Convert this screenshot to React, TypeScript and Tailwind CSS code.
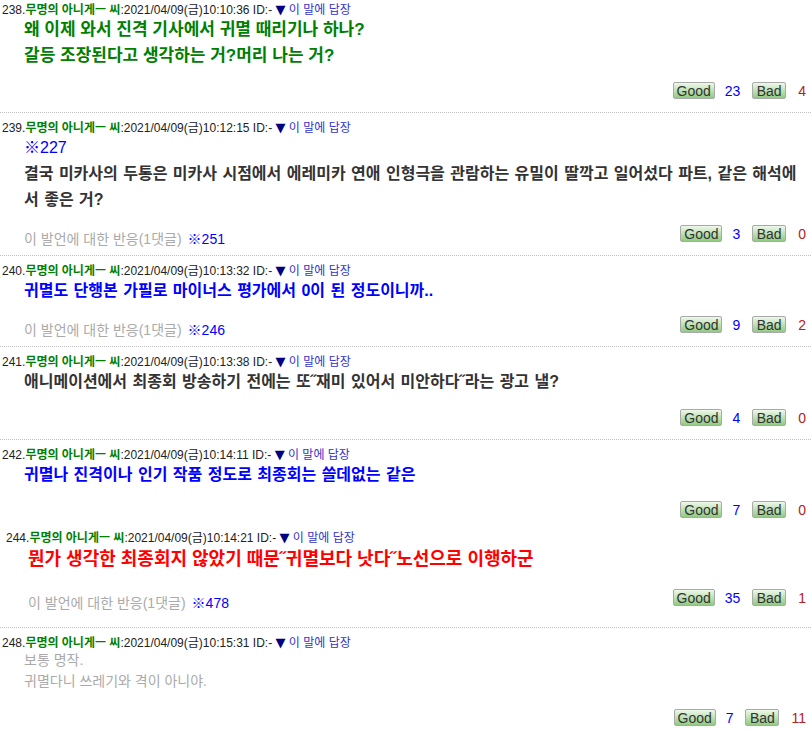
import React from 'react';

type Post = {
  no: number;
  time: string;
  tone: string;
  lines: string[];
  refNo?: string;
  reaction?: string;
  good: number;
  bad: number;
  sep?: boolean;
  shift?: boolean;
  top: string;
  foot: string;
  bottom: string;
};

const posts: Post[] = [
  {
    no: 238,
    time: '10:10:36',
    tone: 'text-[#008000] font-bold text-[17px] leading-[26px]',
    lines: ['왜 이제 와서 진격 기사에서 귀멸 때리기나 하나?', '갈등 조장된다고 생각하는 거?머리 나는 거?'],
    good: 23,
    bad: 4,
    sep: true,
    top: 'pt-[3px]',
    foot: 'mt-[13px]',
    bottom: 'pb-[13px]',
  },
  {
    no: 239,
    time: '10:12:15',
    tone: 'text-[#333333] font-bold text-[16px] leading-[26px] [word-spacing:1px]',
    refNo: '※227',
    lines: [
      '결국 미카사의 두통은 미카사 시점에서 에레미카 연애 인형극을 관람하는 유밀이 딸깍고 일어섰다 파트, 같은 해석에',
      '서 좋은 거?',
    ],
    reaction: '※251',
    good: 3,
    bad: 0,
    sep: true,
    top: 'pt-[8px]',
    foot: 'mt-[12px]',
    bottom: 'pb-[13px]',
  },
  {
    no: 240,
    time: '10:13:32',
    tone: 'text-[#0000ff] font-bold text-[16px] leading-[26px] [word-spacing:1px]',
    lines: ['귀멸도 단행본 가필로 마이너스 평가에서 0이 된 정도이니까..'],
    reaction: '※246',
    good: 9,
    bad: 2,
    sep: true,
    top: 'pt-[8px]',
    foot: 'mt-[12px]',
    bottom: 'pb-[13px]',
  },
  {
    no: 241,
    time: '10:13:38',
    tone: 'text-[#333333] font-bold text-[16px] leading-[26px] [word-spacing:1px]',
    lines: ['애니메이션에서 최종회 방송하기 전에는 또˝재미 있어서 미안하다˝라는 광고 낼?'],
    good: 4,
    bad: 0,
    sep: true,
    top: 'pt-[8px]',
    foot: 'mt-[14px]',
    bottom: 'pb-[13px]',
  },
  {
    no: 242,
    time: '10:14:11',
    tone: 'text-[#0000ff] font-bold text-[16px] leading-[26px] [word-spacing:1px]',
    lines: ['귀멸나 진격이나 인기 작품 정도로 최종회는 쓸데없는 같은'],
    good: 7,
    bad: 0,
    top: 'pt-[8px]',
    foot: 'mt-[13px]',
    bottom: 'pb-[13px]',
  },
  {
    no: 244,
    time: '10:14:21',
    tone: 'text-[#ff0000] font-bold text-[18px] leading-[28px]',
    lines: ['뭔가 생각한 최종회지 않았기 때문˝귀멸보다 낫다˝노선으로 이행하군'],
    reaction: '※478',
    good: 35,
    bad: 1,
    sep: true,
    shift: true,
    top: 'pt-0',
    foot: 'mt-[16px]',
    bottom: 'pb-[21px]',
  },
  {
    no: 248,
    time: '10:15:31',
    tone: 'text-[#aaaaaa] text-[14px] leading-[21px]',
    lines: ['보통 명작.', '귀멸다니 쓰레기와 격이 아니야.'],
    good: 7,
    bad: 11,
    top: 'pt-[8px]',
    foot: 'mt-[17px]',
    bottom: 'pb-[13px]',
  },
];

const font = { fontFamily: '"Liberation Sans", "Noto Sans CJK KR", sans-serif' };

function VoteButton({ label, width }: { label: string; width: string }) {
  return (
    <span
      className={`${width} h-[17px] flex items-center justify-center border border-[#a9a9a9] rounded-[2px] bg-gradient-to-b from-[#eef8ea] to-[#8fcb7f] text-[14px] leading-none text-[#333333]`}
    >
      {label}
    </span>
  );
}

function PostItem({ post }: { post: Post }) {
  return (
    <div className={`${post.top} ${post.bottom} ${post.shift ? 'pl-[6px]' : 'pl-[2px]'}`}>
      <div className="text-[12px] leading-[14px] text-[#222222] whitespace-nowrap">
        <span>{post.no}.</span>
        <span className="font-bold text-[#008000]">무명의 아니게ㅡ 씨</span>
        <span>:2021/04/09(금){post.time} ID:- </span>
        <span className="text-[13px] text-[#000080] [font-family:'DejaVu_Sans',sans-serif]">▼</span>
        <span className="text-[#3333cc]"> 이 말에 답장</span>
      </div>
      <div className="pl-[22px]">
        {post.refNo && <div className="text-[16px] leading-[26px] text-[#0000ff]">{post.refNo}</div>}
        <div className={post.tone}>
          {post.lines.map((l) => (
            <div key={l} className="whitespace-nowrap">
              {l}
            </div>
          ))}
        </div>
      </div>
      <div className={`flex items-center justify-between h-[17px] pr-[5px] ${post.foot}`}>
        {post.reaction ? (
          <span className="relative top-[5px] pl-[22px] text-[14px] leading-[16px] text-[#aaaaaa] whitespace-nowrap">
            이 발언에 대한 반응(1댓글)<span className="ml-[6px] text-[#0000ff]">{post.reaction}</span>
          </span>
        ) : (
          <span />
        )}
        <div className="flex items-center text-[14px] leading-none">
          <VoteButton label="Good" width="w-[42px]" />
          <span className="ml-[10px] mr-[12px] text-[#0000ff]">{post.good}</span>
          <VoteButton label="Bad" width="w-[34px]" />
          <span className="ml-[12px] text-[#b22222]">{post.bad}</span>
        </div>
      </div>
    </div>
  );
}

export default function App() {
  return (
    <div className="w-[811px] h-[731px] overflow-hidden bg-white" style={font}>
      {posts.map((p) => (
        <div key={p.no}>
          <PostItem post={p} />
          {p.sep && <div className="border-t border-dotted border-[#c0c0c0]" />}
        </div>
      ))}
    </div>
  );
}
